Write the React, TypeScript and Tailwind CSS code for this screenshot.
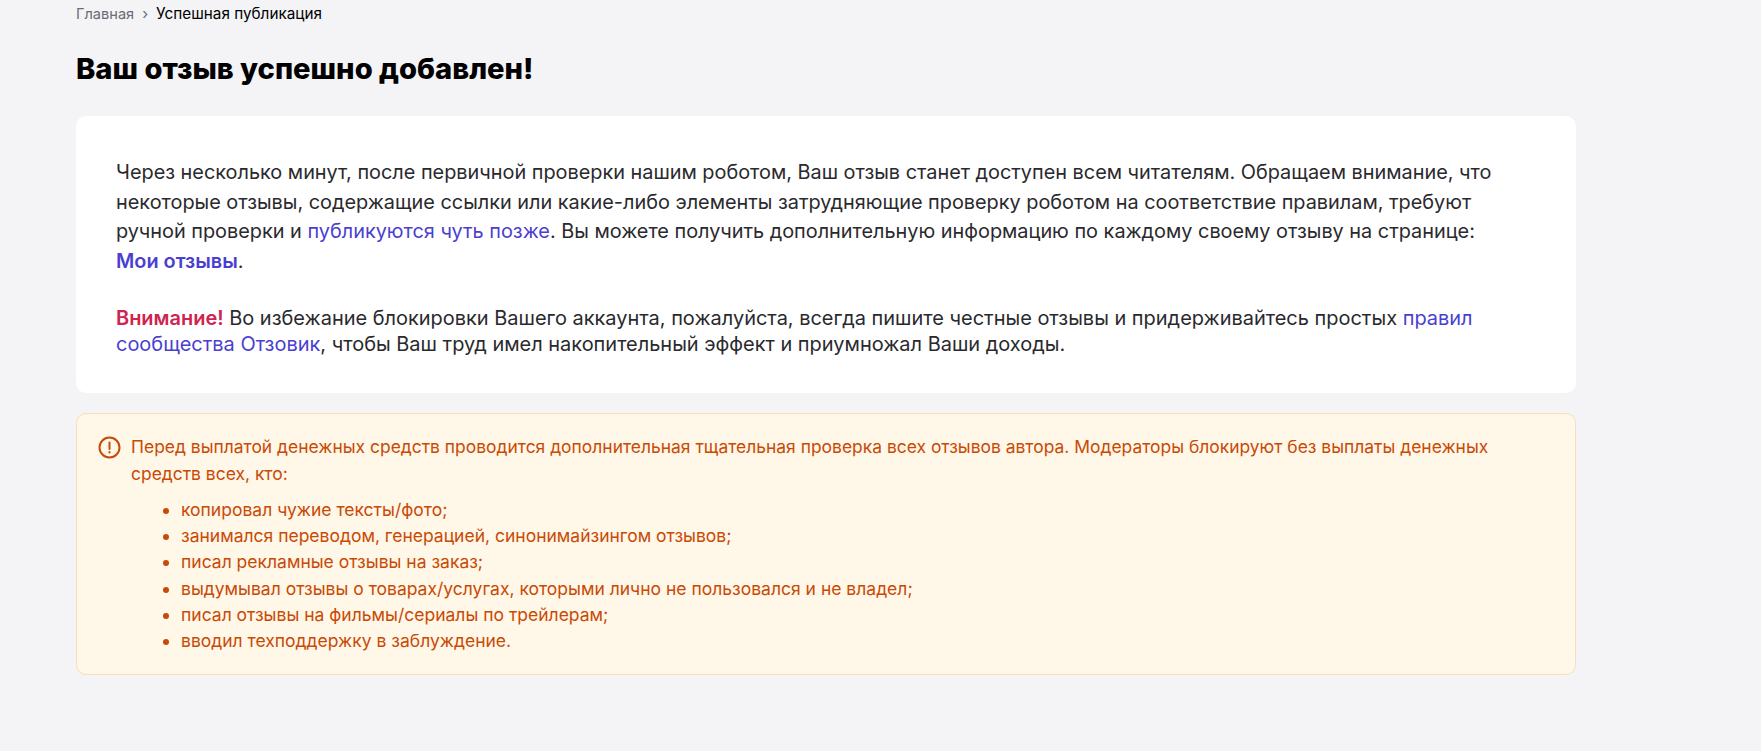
export default function App() {
  const items = [
    "копировал чужие тексты/фото;",
    "занимался переводом, генерацией, синонимайзингом отзывов;",
    "писал рекламные отзывы на заказ;",
    "выдумывал отзывы о товарах/услугах, которыми лично не пользовался и не владел;",
    "писал отзывы на фильмы/сериалы по трейлерам;",
    "вводил техподдержку в заблуждение.",
  ];
  return (
    <div className="min-h-[751px] bg-[#f4f4f7] font-['Inter',sans-serif] pl-[76px]">
      <div className="w-[1500px]">
        <div className="flex items-center h-[28px] text-[15.3px] leading-[28px]">
          <span className="text-[#6b6b73] text-[14.6px]">Главная</span>
          <span className="text-[#6b6b73] mx-[8px]">›</span>
          <span className="text-black">Успешная публикация</span>
        </div>
        <h1 className="mt-[23px] text-[29.15px] leading-[36px] font-extrabold text-black">Ваш отзыв успешно добавлен!</h1>
        <div className="mt-[29px] bg-white rounded-[10px] px-[40px] pt-[42px] pb-[36px] text-[19.87px] text-[#2a2a2e]">
          <p className="leading-[29.6px]">
            Через несколько минут, после первичной проверки нашим роботом, Ваш отзыв станет доступен всем читателям. Обращаем внимание, что некоторые отзывы, содержащие ссылки или какие-либо элементы затрудняющие проверку роботом на соответствие правилам, требуют ручной проверки и{" "}
            <a className="text-[#4a3fd0]">публикуются чуть позже</a>. Вы можете получить дополнительную информацию по каждому своему отзыву на странице:{" "}
            <a className="text-[#4a3fd0] font-semibold whitespace-nowrap">Мои отзывы</a>.
          </p>
          <p className="mt-[29px] leading-[26px] text-[19.97px]">
            <b className="text-[#d0234f] font-semibold">Внимание!</b> Во избежание блокировки Вашего аккаунта, пожалуйста, всегда пишите честные отзывы и придерживайтесь простых{" "}
            <a className="text-[#4a3fd0]">правил сообщества Отзовик</a>, чтобы Ваш труд имел накопительный эффект и приумножал Ваши доходы.
          </p>
        </div>
        <div className="mt-[20px] flex gap-[10px] bg-[#fff7e8] border border-[#f5dfbd] rounded-[10px] pl-[21px] pr-[40px] pt-[20px] pb-[20px] text-[17.45px] leading-[26.25px] text-[#c94a05]">
          <svg className="shrink-0 mt-[2px]" width="23" height="23" viewBox="0 0 23 23" fill="none" stroke="#c94a05" strokeWidth="2">
            <circle cx="11.5" cy="11.5" r="10" />
            <path d="M11.5 6.5v6.5" strokeLinecap="round" />
            <path d="M11.5 16v.4" strokeLinecap="round" />
          </svg>
          <div>
            <p>Перед выплатой денежных средств проводится дополнительная тщательная проверка всех отзывов автора. Модераторы блокируют без выплаты денежных средств всех, кто:</p>
            <ul className="list-disc mt-[10px] pl-[50px] text-[17.5px] marker:text-[#c94a05]">
              {items.map((t) => (
                <li key={t}>{t}</li>
              ))}
            </ul>
          </div>
        </div>
      </div>
    </div>
  );
}
